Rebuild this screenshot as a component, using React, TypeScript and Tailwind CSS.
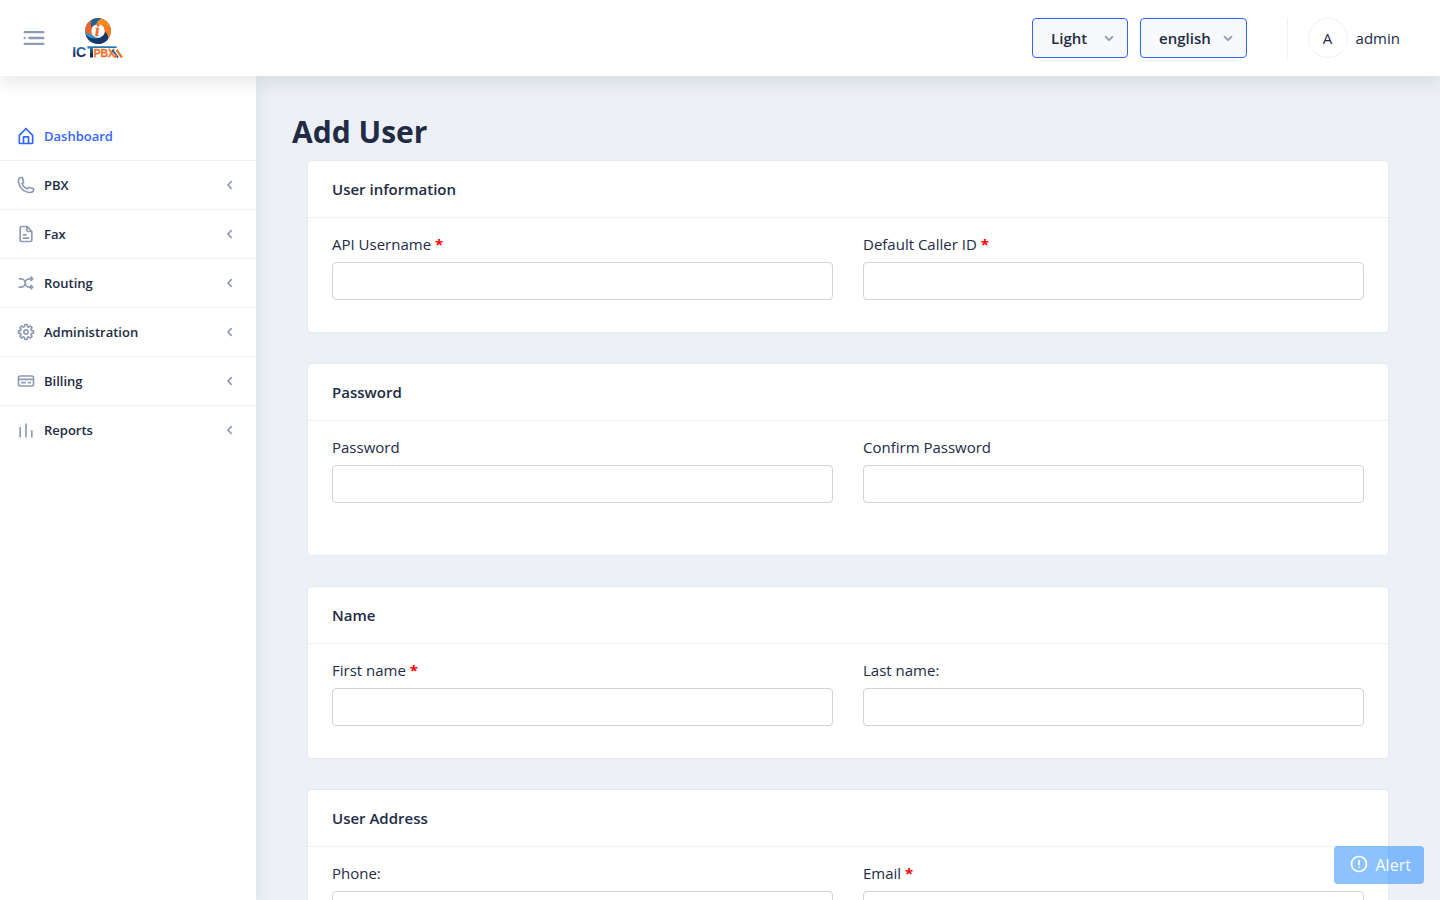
import type { ReactNode } from "react";

type IconProps = {
  name: keyof typeof icons;
  className?: string;
};

const icons = {
  home: "M20.42 10.18L12.71 2.3a1 1 0 0 0-1.42 0l-7.71 7.89A2 2 0 0 0 3 11.62V20a2 2 0 0 0 1.89 2h14.22A2 2 0 0 0 21 20v-8.38a2.07 2.07 0 0 0-.58-1.44zM10 20v-6h4v6zm9 0h-3v-7a1 1 0 0 0-1-1H9a1 1 0 0 0-1 1v7H5v-8.42l7-7.15 7 7.19z",
  phone:
    "M17.4 22A15.42 15.42 0 0 1 2 6.6 4.6 4.6 0 0 1 6.6 2a3.94 3.94 0 0 1 .77.07 3.79 3.79 0 0 1 .72.18 1 1 0 0 1 .65.75l1.37 6a1 1 0 0 1-.26.92c-.13.14-.14.15-1.37.79a9.91 9.91 0 0 0 4.87 4.89c.65-1.24.66-1.25.8-1.38a1 1 0 0 1 .92-.26l6 1.37a1 1 0 0 1 .72.65 4.34 4.34 0 0 1 .19.73 4.77 4.77 0 0 1 .06.76A4.6 4.6 0 0 1 17.4 22zM6.6 4A2.61 2.61 0 0 0 4 6.6 13.41 13.41 0 0 0 17.4 20a2.61 2.61 0 0 0 2.6-2.6v-.33L15.36 16l-.29.55c-.45.87-.78 1.5-1.62 1.16a11.85 11.85 0 0 1-7.18-7.21c-.36-.78.32-1.14 1.18-1.59L8 8.64 6.93 4z",
  file: "M15 16H9a1 1 0 0 0 0 2h6a1 1 0 0 0 0-2z M9 14h3a1 1 0 0 0 0-2H9a1 1 0 0 0 0 2z M19.74 8.33l-5.44-6a1 1 0 0 0-.74-.33h-7A2.53 2.53 0 0 0 4 4.5v15A2.53 2.53 0 0 0 6.56 22h10.88A2.53 2.53 0 0 0 20 19.5V9a1 1 0 0 0-.26-.67zM14 5l2.74 3h-2a.79.79 0 0 1-.74-.85zm3.44 15H6.56a.53.53 0 0 1-.56-.5v-15a.53.53 0 0 1 .56-.5H12v3.15A2.79 2.79 0 0 0 14.71 10H18v9.5a.53.53 0 0 1-.56.5z",
  shuffle:
    "M18.71 14.29a1 1 0 0 0-1.42 1.42l.29.29H16a4 4 0 0 1 0-8h1.59l-.3.29a1 1 0 0 0 0 1.42A1 1 0 0 0 18 10a1 1 0 0 0 .71-.29l2-2A1 1 0 0 0 21 7a1 1 0 0 0-.29-.71l-2-2a1 1 0 0 0-1.42 1.42l.29.29H16a6 6 0 0 0-5 2.69A6 6 0 0 0 6 6H4a1 1 0 0 0 0 2h2a4 4 0 0 1 0 8H4a1 1 0 0 0 0 2h2a6 6 0 0 0 5-2.69A6 6 0 0 0 16 18h1.59l-.3.29a1 1 0 0 0 0 1.42A1 1 0 0 0 18 20a1 1 0 0 0 .71-.29l2-2A1 1 0 0 0 21 17a1 1 0 0 0-.29-.71z",
  settings:
    "M12.94 22h-1.89a1.68 1.68 0 0 1-1.68-1.68v-1.09a.34.34 0 0 0-.22-.29.38.38 0 0 0-.41 0l-.74.8a1.67 1.67 0 0 1-2.37 0L4.26 18.4a1.66 1.66 0 0 1-.5-1.19 1.72 1.72 0 0 1 .5-1.21l.74-.74a.34.34 0 0 0 0-.37c-.06-.15-.16-.26-.3-.26H3.68A1.69 1.69 0 0 1 2 12.94v-1.89a1.68 1.68 0 0 1 1.68-1.68h1.09a.34.34 0 0 0 .29-.22.38.38 0 0 0 0-.41L4.26 8a1.67 1.67 0 0 1 0-2.37L5.6 4.26a1.65 1.65 0 0 1 1.18-.5 1.72 1.72 0 0 1 1.22.5l.74.74a.34.34 0 0 0 .37 0c.15-.06.26-.16.26-.3V3.68A1.69 1.69 0 0 1 11.06 2H13a1.68 1.68 0 0 1 1.68 1.68v1.09a.34.34 0 0 0 .22.29.38.38 0 0 0 .41 0l.69-.8a1.67 1.67 0 0 1 2.37 0l1.37 1.34a1.67 1.67 0 0 1 .5 1.19 1.63 1.63 0 0 1-.5 1.18l-.74.74a.34.34 0 0 0 0 .37c.06.15.16.26.3.26h1.09A1.69 1.69 0 0 1 22 11.06V13a1.68 1.68 0 0 1-1.68 1.68h-1.09a.34.34 0 0 0-.29.22.34.34 0 0 0 0 .37l.77.77a1.67 1.67 0 0 1 0 2.37l-1.31 1.33a1.65 1.65 0 0 1-1.18.5 1.72 1.72 0 0 1-1.19-.5l-.77-.74a.34.34 0 0 0-.37 0c-.15.06-.26.16-.26.3v1.09A1.69 1.69 0 0 1 12.94 22zm-1.57-2h1.26v-.77a2.33 2.33 0 0 1 1.46-2.14 2.36 2.36 0 0 1 2.59.47l.54.54.88-.88-.54-.55a2.34 2.34 0 0 1-.48-2.56 2.33 2.33 0 0 1 2.14-1.45H20v-1.29h-.77a2.33 2.33 0 0 1-2.14-1.46 2.36 2.36 0 0 1 .47-2.59l.54-.54-.88-.88-.55.54a2.39 2.39 0 0 1-4-1.67V4h-1.3v.77a2.33 2.33 0 0 1-1.46 2.14 2.36 2.36 0 0 1-2.59-.47l-.54-.54-.88.88.54.55a2.39 2.39 0 0 1-1.67 4H4v1.26h.77a2.33 2.33 0 0 1 2.14 1.46 2.36 2.36 0 0 1-.47 2.59l-.54.54.88.88.55-.54a2.39 2.39 0 0 1 4 1.67z M12 15.5a3.5 3.5 0 1 1 3.5-3.5 3.5 3.5 0 0 1-3.5 3.5zm0-5a1.5 1.5 0 1 0 1.5 1.5 1.5 1.5 0 0 0-1.5-1.5z",
  card: "M19 5H5a3 3 0 0 0-3 3v8a3 3 0 0 0 3 3h14a3 3 0 0 0 3-3V8a3 3 0 0 0-3-3zM4 8a1 1 0 0 1 1-1h14a1 1 0 0 1 1 1v1H4zm16 8a1 1 0 0 1-1 1H5a1 1 0 0 1-1-1v-5h16z M7 15h4a1 1 0 0 0 0-2H7a1 1 0 0 0 0 2z M15 15h2a1 1 0 0 0 0-2h-2a1 1 0 0 0 0 2z",
  chart:
    "M12 4a1 1 0 0 0-1 1v15a1 1 0 0 0 2 0V5a1 1 0 0 0-1-1z M19 12a1 1 0 0 0-1 1v7a1 1 0 0 0 2 0v-7a1 1 0 0 0-1-1z M5 8a1 1 0 0 0-1 1v11a1 1 0 0 0 2 0V9a1 1 0 0 0-1-1z",
  left: "M13.36 17a1 1 0 0 1-.72-.31l-3.86-4a1 1 0 0 1 0-1.4l4-4a1 1 0 1 1 1.42 1.42L10.9 12l3.18 3.3a1 1 0 0 1 0 1.41 1 1 0 0 1-.72.29z",
  down: "M12 15.5a1 1 0 0 1-.71-.29l-4-4a1 1 0 1 1 1.42-1.42L12 13.1l3.3-3.18a1 1 0 1 1 1.38 1.44l-4 3.86a1 1 0 0 1-.68.28z",
  menu: "M5 12a1 1 0 1 1-2 0 1 1 0 0 1 2 0z M8 11h12a1 1 0 0 1 0 2H8a1 1 0 0 1 0-2z M4 16h16a1 1 0 0 1 0 2H4a1 1 0 0 1 0-2z M4 6h16a1 1 0 0 1 0 2H4a1 1 0 0 1 0-2z",
  alert:
    "M12 2a10 10 0 1 0 10 10A10 10 0 0 0 12 2zm0 18a8 8 0 1 1 8-8 8 8 0 0 1-8 8z M13 16a1 1 0 1 1-2 0 1 1 0 0 1 2 0z M12 7a1 1 0 0 0-1 1v5a1 1 0 0 0 2 0V8a1 1 0 0 0-1-1z",
};

const menu: { title: string; icon: keyof typeof icons }[] = [
  { title: "Dashboard", icon: "home" },
  { title: "PBX", icon: "phone" },
  { title: "Fax", icon: "file" },
  { title: "Routing", icon: "shuffle" },
  { title: "Administration", icon: "settings" },
  { title: "Billing", icon: "card" },
  { title: "Reports", icon: "chart" },
];

const Icon = ({ name, className = "size-5" }: IconProps) => {
  return (
    <svg viewBox="0 0 24 24" fill="currentColor" className={`shrink-0 ${className}`}>
      <path d={icons[name]} />
    </svg>
  );
};

// one blade of the logo ring, turned around the centre for each colour
const blade = "M-12.9 0A12.9 12.9 0 0 1 0 -12.9C3 -12.9 5 -12 6.5 -11C0 -11.5 -5 -7 -6.2 -1.5C-6.8 1 -6.6 3 -6 4.5C-10 4 -12.4 2.5 -12.9 0z";

const blades = [
  { angle: 285, fill: "#3591c9" },
  { angle: 5, fill: "#f0642b" },
  { angle: 65, fill: "#1f6296" },
  { angle: 112, fill: "#fb8b1e" },
  { angle: 165, fill: "#f57a22" },
  { angle: 222, fill: "#12386c" },
];

const Logo = () => {
  return (
    <svg viewBox="0 0 52 42" className="w-[52px] h-[42px] ml-6 overflow-visible">
      <defs>
        <linearGradient id="blue" gradientUnits="userSpaceOnUse" x1="0" y1="29" x2="0" y2="41">
          <stop offset="0" stopColor="#2f86bd" />
          <stop offset="0.7" stopColor="#0f2f62" />
        </linearGradient>
      </defs>
      <g transform="translate(26 14)">
        <circle r="9.6" fill="none" stroke="#1f6296" strokeWidth="6" />
        {blades.map((b) => (
          <path key={b.angle} d={blade} fill={b.fill} transform={`rotate(${b.angle})`} />
        ))}
        <circle r="6.7" fill="#fff" />
        <text x="-3" y="5.4" fontSize="16" stroke="#f2662a" strokeWidth="0.4" className="font-['Liberation_Serif'] font-bold italic fill-[#f2662a]">
          i
        </text>
      </g>
      <text x="0.2" y="40.4" fontSize="15" textLength="14" lengthAdjust="spacingAndGlyphs" fill="url(#blue)" className="font-['Liberation_Sans'] font-bold leading-none">
        IC
      </text>
      <path d="M15.4 29.2H44.6V31H21V40.6H18V31.4H15.4z" fill="url(#blue)" />
      <text x="21.6" y="40.4" fontSize="10.5" textLength="21.5" lengthAdjust="spacingAndGlyphs" stroke="#f2702d" strokeWidth="0.3" className="font-['Liberation_Sans'] font-bold leading-none fill-[#f2702d]">
        PBX
      </text>
      <path d="M40.4 33L46 40.6" stroke="#1f5a90" strokeWidth="1.8" />
      <path d="M42.6 40.6L44.4 37.6M44.6 33L50 40.6" stroke="#f2702d" strokeWidth="2.2" />
    </svg>
  );
};

const Select = ({ children }: { children: ReactNode }) => {
  return (
    <button className="flex items-center h-10 pl-[18.5px] pr-2 rounded border border-[#3366ff] bg-[#f7f9fc] text-[#222b45] text-[15px] font-semibold">
      {children}
      <Icon name="down" className="size-5 ml-auto text-[#8f9bb3] stroke-current stroke-[0.4]" />
    </button>
  );
};

const Header = () => {
  return (
    <header className="relative z-20 flex items-center h-[76px] px-5 bg-white shrink-0 shadow-[0_8px_16px_0_rgba(44,51,73,0.1)]">
      <Icon name="menu" className="size-7 text-[#8f9bb3]" />
      <Logo />
      <div className="ml-auto flex items-center pr-5">
        <div className="grid grid-cols-[96px_107px] gap-3">
          <Select>Light</Select>
          <Select>english</Select>
        </div>
        <div className="flex items-center ml-10 pl-5 h-10 border-l border-[#edf1f7]">
          <div className="flex items-center justify-center size-10 rounded-full border border-[#edf1f7] text-[15px]">A</div>
          <span className="ml-2 text-[15px]">admin</span>
        </div>
      </div>
    </header>
  );
};

const Sidebar = () => {
  return (
    <nav className="relative z-10 w-64 shrink-0 bg-white pt-9 shadow-[0_8px_16px_0_rgba(44,51,73,0.1)]">
      {menu.map((item, i) => (
        <a
          key={item.title}
          className={`flex items-center px-4 text-[13px] font-semibold ${i === 0 ? "text-[#3366ff]" : ""} ${
            i < menu.length - 1 ? "h-[49px] border-b border-[#edf1f7]" : "h-12"
          }`}
        >
          <Icon name={item.icon} className={i === 0 ? "size-5" : "size-5 text-[#8f9bb3]"} />
          <span className="ml-2 leading-5">{item.title}</span>
          {i > 0 && <Icon name="left" className="size-5 ml-auto text-[#8f9bb3]" />}
        </a>
      ))}
    </nav>
  );
};

const Card = ({ title, children, className = "pb-8" }: { title: string; children: ReactNode; className?: string }) => {
  return (
    <section className="mx-[15px] mb-[30px] bg-white border border-[#e4e9f2] rounded">
      <h5 className="h-[57px] px-6 flex items-center border-b border-[#edf1f7] text-[15px] font-semibold">{title}</h5>
      <div className={`grid grid-cols-2 gap-x-[30px] px-6 pt-3.5 ${className}`}>{children}</div>
    </section>
  );
};

const Field = ({ label, required }: { label: string; required?: boolean }) => {
  return (
    <label className="block text-[15px] leading-6">
      {label} {required && <b className="text-[#ff0000]">*</b>}
      <input className="block w-full h-[38px] mt-1.5 px-3 rounded border border-[#ced4da] bg-white outline-none" />
    </label>
  );
};

export default function App() {
  return (
    <div className="flex flex-col h-screen overflow-hidden bg-[#edf1f7] text-[#222b45] font-['Open_Sans',sans-serif]">
      <Header />
      <div className="flex flex-1 min-h-0">
        <Sidebar />
        <main className="flex-1 px-9 pt-9 overflow-hidden">
          <h2 className="h-12 text-[30px] leading-10 font-bold">Add User</h2>
          <Card title="User information">
            <Field label="API Username" required />
            <Field label="Default Caller ID" required />
          </Card>
          <Card title="Password" className="pb-[52px]">
            <Field label="Password" />
            <Field label="Confirm Password" />
          </Card>
          <Card title="Name">
            <Field label="First name" required />
            <Field label="Last name:" />
          </Card>
          <Card title="User Address">
            <Field label="Phone:" />
            <Field label="Email" required />
          </Card>
        </main>
      </div>
      <button className="fixed right-4 bottom-4 z-30 flex items-center w-[90px] h-[38px] pl-[15px] rounded bg-[#007bff] text-white opacity-45">
        <Icon name="alert" className="size-5 mb-0.5" />
        <span className="ml-[6.5px]">Alert</span>
      </button>
    </div>
  );
}
